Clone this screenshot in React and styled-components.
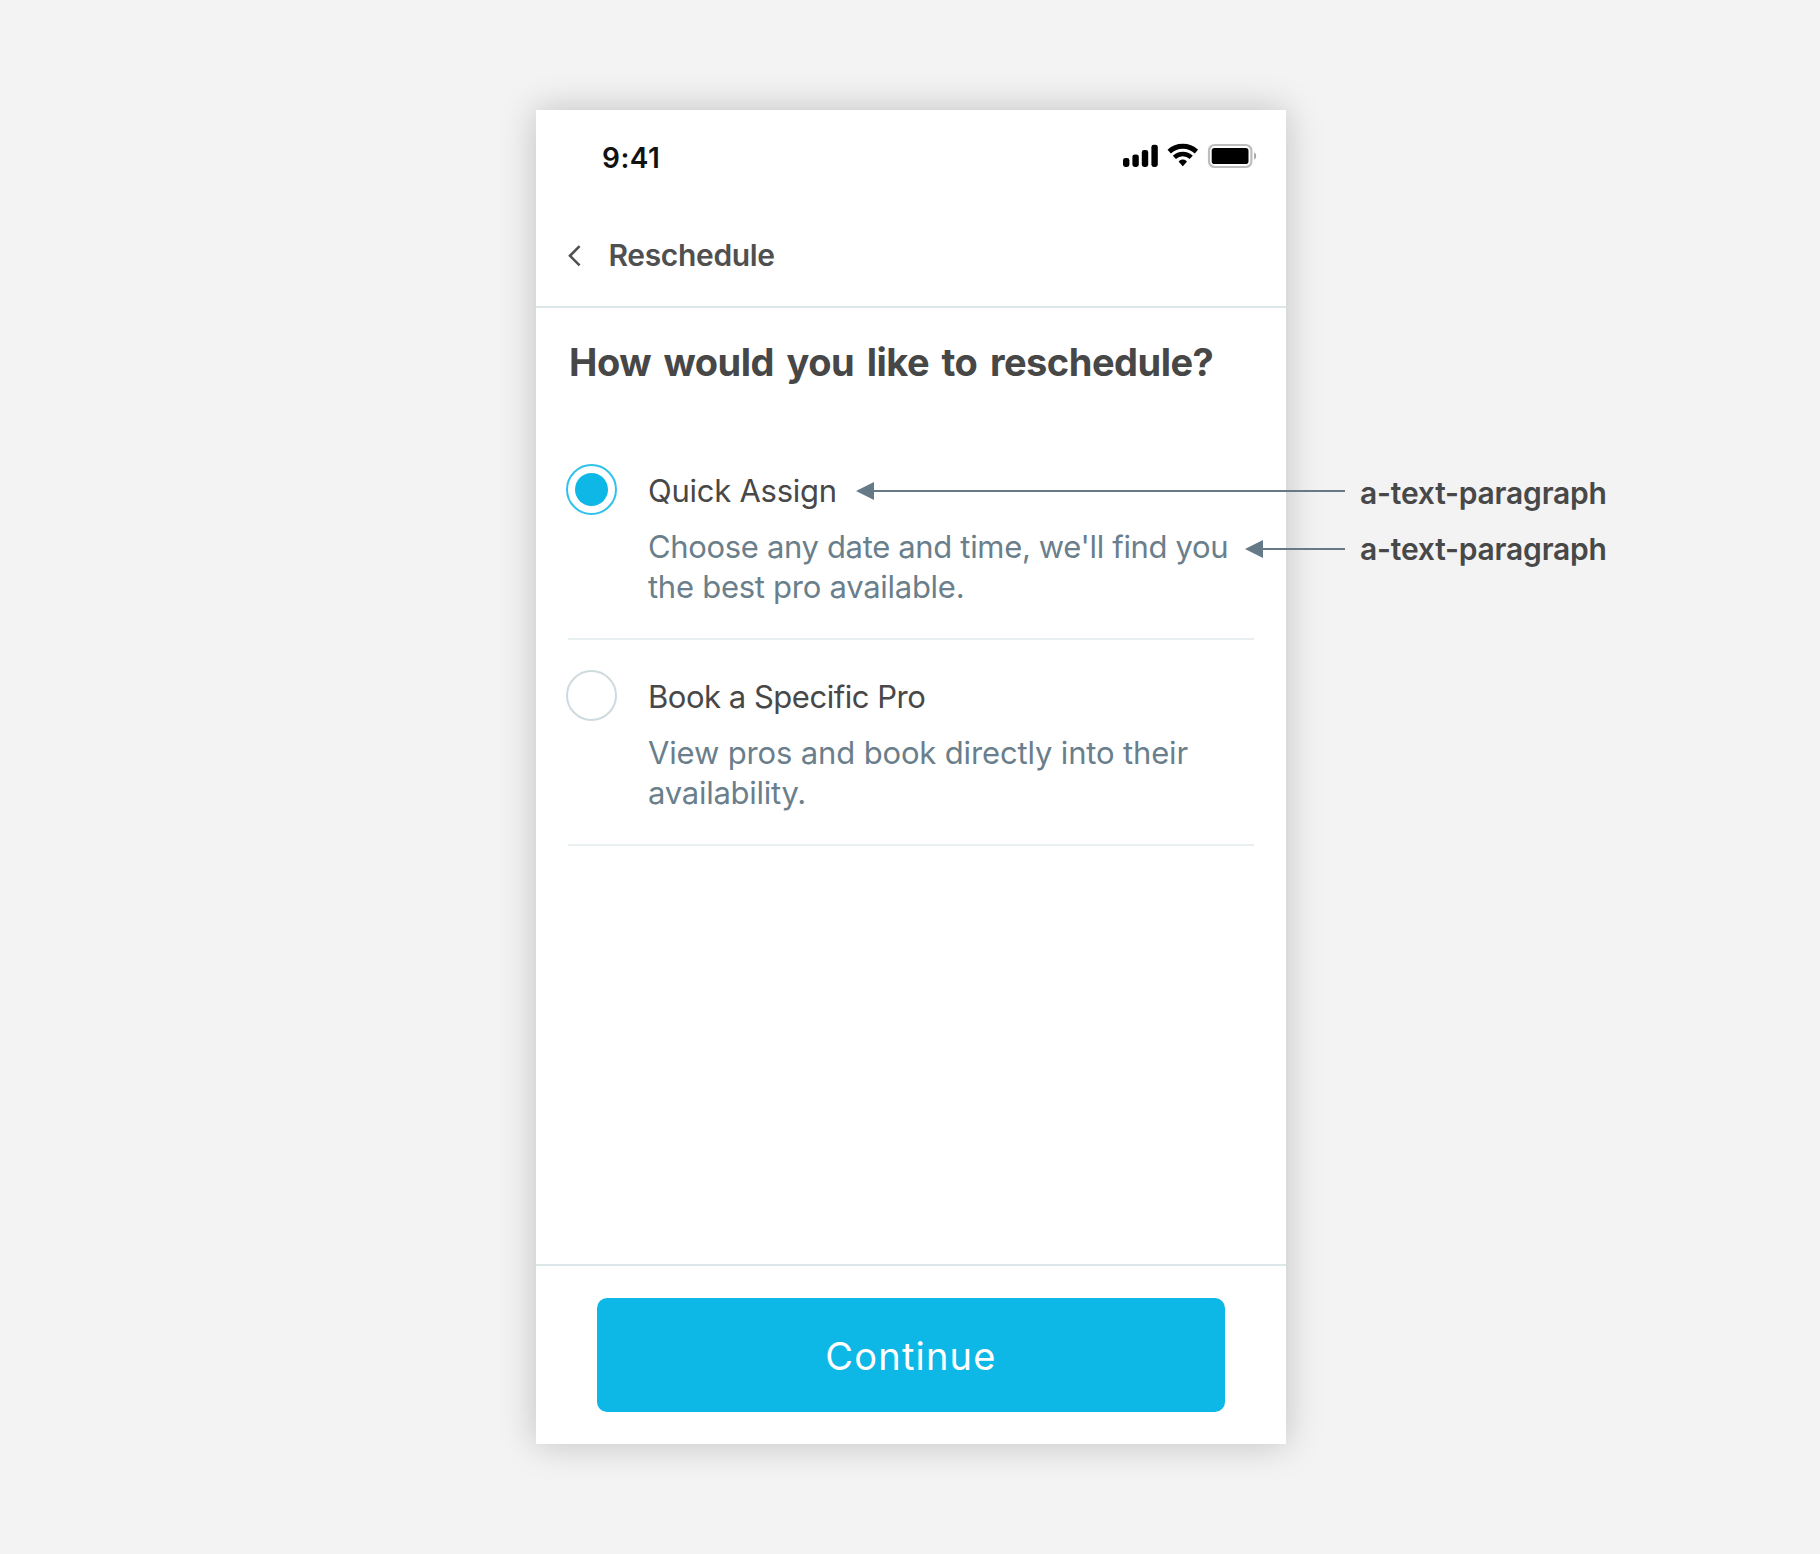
import React, { useState } from 'react';
import styled, { createGlobalStyle } from 'styled-components';

const GlobalStyle = createGlobalStyle`
  *, *::before, *::after { box-sizing: border-box; }
  body {
    margin: 0;
    background: #f3f3f3;
    font-family: Inter, 'Liberation Sans', sans-serif;
    color: #484848;
  }
`;

const Stage = styled.main`
  display: flex;
  justify-content: center;
  padding: 110px 0 110px 2px;
  height: 1554px;
`;

const Phone = styled.section`
  position: relative;
  display: flex;
  flex-direction: column;
  width: 750px;
  height: 1334px;
  background: #fff;
  box-shadow: 0 0 34px rgba(0, 0, 0, 0.21);
`;

const StatusBar = styled.div`
  display: flex;
  justify-content: space-between;
  align-items: flex-start;
  height: 88px;
  padding: 31px 29px 0 66px;
`;

const Clock = styled.time`
  font-size: 28px;
  font-weight: 600;
  line-height: 34px;
  letter-spacing: 0.5px;
  color: #111;
`;

const StatusIcons = styled.div`
  display: flex;
  gap: 8px;
  padding-top: 1px;

  svg { display: block; }
`;

const NavBar = styled.header`
  display: flex;
  align-items: flex-start;
  gap: 25px;
  height: 110px;
  padding: 37px 32px 0 29.5px;
  border-bottom: 2px solid #dde6e8;
`;

const BackButton = styled.button`
  display: flex;
  align-items: center;
  height: 40px;
  padding: 2px 0 0;
  border: 0;
  background: none;
  color: #505050;
`;

const NavTitle = styled.span`
  font-size: 30px;
  font-weight: 600;
  line-height: 40px;
  letter-spacing: -0.35px;
  color: #505050;
`;

const Content = styled.div`
  flex: 1;
  padding: 30px 32px 0;
`;

const Question = styled.h1`
  margin: 0 0 48px;
  padding-left: 1px;
  font-size: 38px;
  font-weight: 700;
  line-height: 48px;
  letter-spacing: -0.5px;
  word-spacing: 4px;
  white-space: nowrap;
  color: #474747;
`;

const Option = styled.label`
  display: flex;
  align-items: flex-start;
  gap: 31px;
  height: 206px;
  margin-left: -2px;
  padding-top: 30px;
  background: linear-gradient(#e8f0f1, #e8f0f1) right bottom / calc(100% - 2px) 2px no-repeat;
`;

const Radio = styled.input`
  appearance: none;
  display: flex;
  align-items: center;
  justify-content: center;
  flex: none;
  width: 51px;
  height: 51px;
  margin: 0;
  border: 2px solid #cfdade;
  border-radius: 50%;

  &:checked { border-color: #2fc2ea; }

  &:checked::before {
    content: '';
    width: 33px;
    height: 33px;
    border-radius: 50%;
    background: #0db8e6;
  }
`;

const OptionText = styled.div`
  display: flex;
  flex-direction: column;
  gap: 16px;
  padding-top: 7px;
`;

const Line = styled.span`
  display: block;
  font-size: 31px;
  line-height: 40px;
  white-space: nowrap;
  letter-spacing: ${(p) => p.$track}px;
`;

const OptionTitle = styled(Line)`
  color: #484848;
`;

const Description = styled.div`
  color: #6a7f8b;
`;

const Footer = styled.footer`
  height: 180px;
  padding: 32px 61px;
  border-top: 2px solid #dde6e8;
`;

const PrimaryButton = styled.button`
  display: flex;
  align-items: center;
  justify-content: center;
  width: 100%;
  height: 114px;
  padding: 1px 0 0;
  border: 0;
  border-radius: 10px;
  background: #0db8e6;
  color: #fff;
  font-family: inherit;
  font-size: 38px;
  font-weight: 400;
  letter-spacing: 1.2px;
`;

const Annotations = styled.aside`
  position: absolute;
  left: 320px;
  top: 355px;
  display: grid;
  grid-template-columns: 489px auto;
  grid-auto-rows: 56px;
  column-gap: 15px;
  align-items: center;
`;

const Arrow = styled.div`
  justify-self: end;
  display: flex;
  align-items: center;
  width: ${(p) => p.$length}px;
  margin-bottom: ${(p) => p.$lift}px;
  color: #657986;

  &::before {
    content: '';
    border: 9px solid transparent;
    border-left-width: 0;
    border-right: 18px solid currentColor;
  }

  &::after {
    content: '';
    flex: 1;
    height: 2px;
    background: currentColor;
  }
`;

const Note = styled.span`
  font-size: 30px;
  font-weight: 600;
  line-height: 56px;
  letter-spacing: -0.2px;
  white-space: nowrap;
  color: #484848;
`;

const SignalIcon = () => (
  <svg width="37" height="28" viewBox="0 0 37 28">
    <rect x="1" y="16" width="6.4" height="9" rx="2.4" />
    <rect x="10.4" y="12.4" width="6.4" height="12.6" rx="2.4" />
    <rect x="19.8" y="8" width="6.4" height="17" rx="2.4" />
    <rect x="29.4" y="2.8" width="6.4" height="22.2" rx="2.4" />
  </svg>
);

const WifiIcon = () => (
  <svg width="32" height="28" viewBox="0 0 32 28">
    <g fill="none" stroke="#000">
      <path d="M2.2 9.6A20 20 0 0 1 29.4 9.6" strokeWidth="4.9" />
      <path d="M7.4 15.3A12.2 12.2 0 0 1 24.2 15.3" strokeWidth="4.6" />
    </g>
    <path
      d="M15.8 23.4L12.5 19.6A5.4 5.4 0 0 1 19.1 19.6Z"
      stroke="#000"
      strokeWidth="1.4"
      strokeLinejoin="round"
    />
  </svg>
);

const BatteryIcon = () => (
  <svg width="50" height="28" viewBox="0 0 50 28">
    <rect x="2" y="3" width="42.4" height="22" rx="5.6" fill="none" stroke="#bdbdbd" strokeWidth="2.2" />
    <rect x="4.7" y="6" width="36.8" height="16" rx="2.8" />
    <path d="M47.2 10.6c2.6 1.2 2.6 5.8 0 7z" fill="#a0a0a0" />
  </svg>
);

const ChevronLeft = () => (
  <svg width="18" height="28" viewBox="0 0 18 28" fill="none" stroke="currentColor" strokeWidth="2.6">
    <path d="M13.6 4.2L4 13.8l9.6 9.6" />
  </svg>
);

const options = [
  {
    id: 'quick',
    title: ['Quick Assign', -0.25],
    lines: [
      ["Choose any date and time, we'll find you", -0.34],
      ['the best pro available.', -0.27],
    ],
  },
  {
    id: 'specific',
    title: ['Book a Specific Pro', -0.48],
    lines: [
      ['View pros and book directly into their', -0.15],
      ['availability.', -0.25],
    ],
  },
];

const notes = [
  { length: 489, lift: 4 },
  { length: 100, lift: 0 },
];

export default function App() {
  const [selected, setSelected] = useState('quick');

  return (
    <>
      <GlobalStyle />
      <Stage>
        <Phone>
          <StatusBar>
            <Clock>9:41</Clock>
            <StatusIcons>
              <SignalIcon />
              <WifiIcon />
              <BatteryIcon />
            </StatusIcons>
          </StatusBar>
          <NavBar>
            <BackButton aria-label="Back">
              <ChevronLeft />
            </BackButton>
            <NavTitle>Reschedule</NavTitle>
          </NavBar>
          <Content>
            <Question>How would you like to reschedule?</Question>
            {options.map(({ id, title, lines }) => (
              <Option key={id}>
                <Radio
                  type="radio"
                  name="method"
                  checked={selected === id}
                  onChange={() => setSelected(id)}
                />
                <OptionText>
                  <OptionTitle $track={title[1]}>{title[0]}</OptionTitle>
                  <Description>
                    {lines.map(([text, track]) => (
                      <Line key={text} $track={track}>{text}</Line>
                    ))}
                  </Description>
                </OptionText>
              </Option>
            ))}
          </Content>
          <Footer>
            <PrimaryButton>Continue</PrimaryButton>
          </Footer>
          <Annotations>
            {notes.map(({ length, lift }) => (
              <React.Fragment key={length}>
                <Arrow $length={length} $lift={lift} />
                <Note>a-text-paragraph</Note>
              </React.Fragment>
            ))}
          </Annotations>
        </Phone>
      </Stage>
    </>
  );
}
